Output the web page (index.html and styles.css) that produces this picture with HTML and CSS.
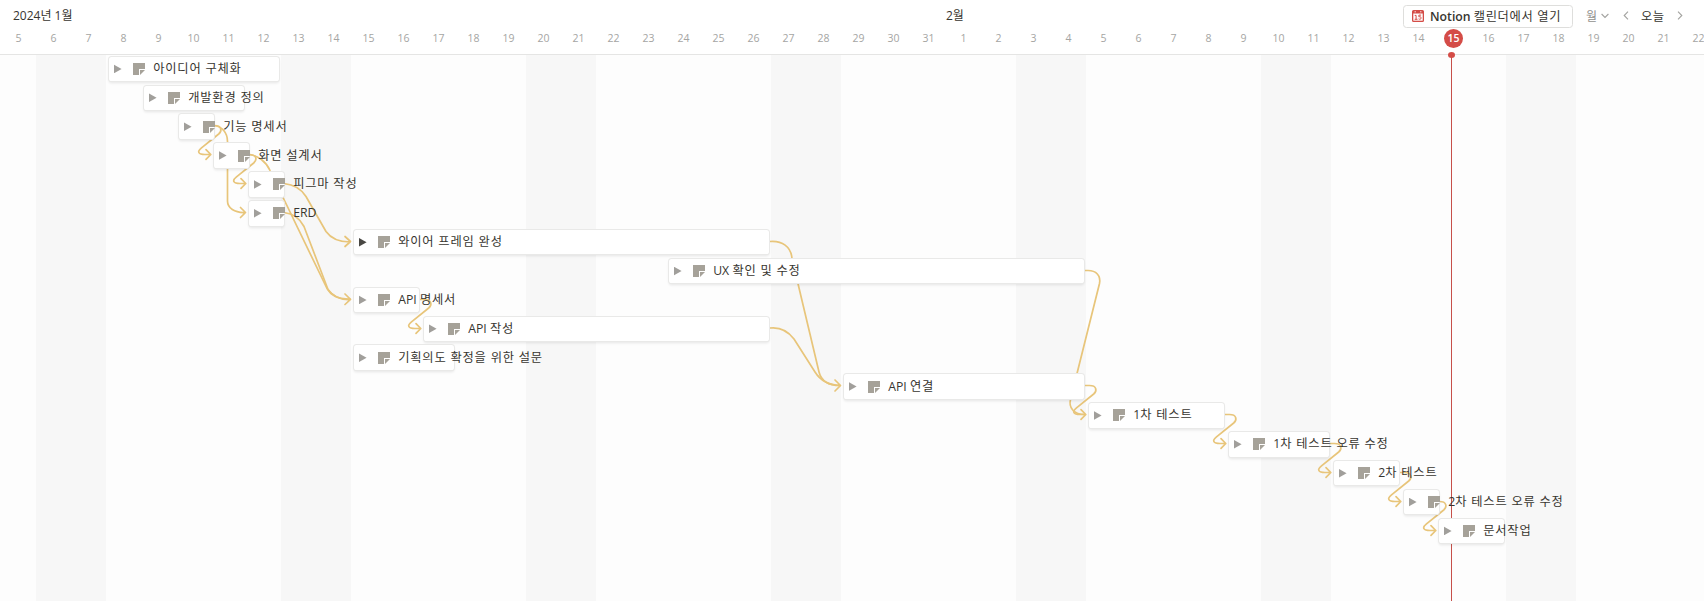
FILE: index.html
```html
<!DOCTYPE html>
<html lang="ko">
<head>
<meta charset="utf-8">
<title>타임라인</title>
<link rel="stylesheet" href="styles.css">
</head>
<body>
<div class="timeline">
  <header class="header">
    <div class="months">
      <span class="month month-first">2024년 1월</span>
      <span class="month month-second">2월</span>
      <div class="controls">
        <button class="calendar-button">
          <svg class="calendar-icon" viewBox="0 0 12 12"><path d="M1.500 0h9A1.500 1.500 0 0 1 12 1.500v9a1.500 1.500 0 0 1-1.500 1.500h-9A1.500 1.500 0 0 1 0 10.500v-9A1.500 1.500 0 0 1 1.500 0z" fill="#d44c47"/><path d="M1.300 3.500h9.400v7.200H1.300z" fill="#fff"/><path d="M2.500 1.800h1.500M8 1.800h1.500" stroke="#fff" stroke-width=".8"/><path d="M2.700 5.400h1.400v3.900M2.700 9.300h2.800M9.100 5.100H6.900v1.800c1.100-.4 2.300 0 2.300 1.100s-1.500 1.600-2.600.9" fill="none" stroke="#d44c47" stroke-width="1"/></svg>
          <span>Notion <span class="button-ko">캘린더에서 열기</span></span>
        </button>
        <span class="scale">월</span>
        <svg class="chevron-down" viewBox="0 0 8 6"><path d="M.6 1l3.400 3.500L7.400 1"/></svg>
        <svg class="chevron prev" viewBox="0 0 6 9"><path d="M5 .7L1.200 4.500L5 8.300"/></svg>
        <span class="today">오늘</span>
        <svg class="chevron next" viewBox="0 0 6 9"><path d="M1 .7l3.800 3.800L1 8.300"/></svg>
      </div>
    </div>
    <div class="days">
      <span>5</span><span>6</span><span>7</span><span>8</span><span>9</span><span>10</span><span>11</span><span>12</span><span>13</span><span>14</span><span>15</span><span>16</span><span>17</span><span>18</span><span>19</span><span>20</span><span>21</span><span>22</span><span>23</span><span>24</span><span>25</span><span>26</span><span>27</span><span>28</span><span>29</span><span>30</span><span>31</span><span>1</span><span>2</span><span>3</span><span>4</span><span>5</span><span>6</span><span>7</span><span>8</span><span>9</span><span>10</span><span>11</span><span>12</span><span>13</span><span>14</span><span><b class="current">15</b></span><span>16</span><span>17</span><span>18</span><span>19</span><span>20</span><span>21</span><span>22</span>
    </div>
  </header>
  <main class="board">
    <svg class="links" viewBox="0 0 1704 546" width="1704" height="546">
      <defs>
        <path id="hop" d="M0 0h4.500c7 0 8 5 4.200 8.500L-8.500 22.300c-5 4-3 6.700 3.500 6.700h5.700M-4 24.200l4.800 4.800-4.800 4.800"/>
      </defs>
      <g transform="translate(0 -55)">
        <use href="#hop" x="210" y="125.500"/>
        <use href="#hop" x="245" y="154.500"/>
        <use href="#hop" x="420" y="299.500"/>
        <use href="#hop" x="1085" y="385.500"/>
        <use href="#hop" x="1225" y="414.500"/>
        <use href="#hop" x="1330" y="443.500"/>
        <use href="#hop" x="1400" y="472.500"/>
        <use href="#hop" x="1435" y="501.500"/>
        <path d="M214 125.500c8 1 13.500 7 13.500 16V201c0 7 7 12 17.500 11.500M240.500 207.500l5 5-5 5"/>
        <path d="M249 154.500c9 1 17 7 21 16l57 118c4 7 12 11 23 10.500"/>
        <path d="M284 183.500c9 1 17 5 22 13l20 35c5 7 12 10.500 24 10.500M345 236.500l5.500 5-5.500 5"/>
        <path d="M284 212.500c9 1 16 6 20 14l24 63c4 6 12 10.500 22 10M345 294l5.500 5.300-5.500 5.200"/>
        <path d="M770 241.500c12-1 21 5 22 17L819 372c2 8 9 13.500 21 13.500"/>
        <path d="M770 328c9-1 18 3 24 11l21 33c5 8 12 13 25 13.500M835 380l5.500 5.500-5.500 5.500"/>
        <path d="M1085 270.500h3c8 0 13 5 11.500 13l-29 116c-2 8 3 15 14.500 15"/>
      </g>
    </svg>
    <i class="now"></i>
    <div class="rows">
      <div class="row"><div class="bar" style="--start:3;--span:5"><i class="toggle"></i><svg class="page" viewBox="0 0 12 12"><path d="M0 0h12v6H6v6H0z"/><path d="M7 7h5l-5 5z"/></svg><span class="title">아이디어 구체화</span></div></div>
      <div class="row"><div class="bar" style="--start:4;--span:3"><i class="toggle"></i><svg class="page" viewBox="0 0 12 12"><path d="M0 0h12v6H6v6H0z"/><path d="M7 7h5l-5 5z"/></svg><span class="title">개발환경 정의</span></div></div>
      <div class="row"><div class="bar" style="--start:5;--span:1"><i class="toggle"></i><svg class="page" viewBox="0 0 12 12"><path d="M0 0h12v6H6v6H0z"/><path d="M7 7h5l-5 5z"/></svg><span class="title">기능 명세서</span></div></div>
      <div class="row"><div class="bar" style="--start:6;--span:1"><i class="toggle"></i><svg class="page" viewBox="0 0 12 12"><path d="M0 0h12v6H6v6H0z"/><path d="M7 7h5l-5 5z"/></svg><span class="title">화면 설계서</span></div></div>
      <div class="row"><div class="bar" style="--start:7;--span:1"><i class="toggle"></i><svg class="page" viewBox="0 0 12 12"><path d="M0 0h12v6H6v6H0z"/><path d="M7 7h5l-5 5z"/></svg><span class="title">피그마 작성</span></div></div>
      <div class="row"><div class="bar" style="--start:7;--span:1"><i class="toggle"></i><svg class="page" viewBox="0 0 12 12"><path d="M0 0h12v6H6v6H0z"/><path d="M7 7h5l-5 5z"/></svg><span class="title"><span class="latin">ERD</span></span></div></div>
      <div class="row"><div class="bar" style="--start:10;--span:12"><i class="toggle filled"></i><svg class="page" viewBox="0 0 12 12"><path d="M0 0h12v6H6v6H0z"/><path d="M7 7h5l-5 5z"/></svg><span class="title">와이어 프레임 완성</span></div></div>
      <div class="row"><div class="bar" style="--start:19;--span:12"><i class="toggle"></i><svg class="page" viewBox="0 0 12 12"><path d="M0 0h12v6H6v6H0z"/><path d="M7 7h5l-5 5z"/></svg><span class="title"><span class="latin">UX </span>확인 및 수정</span></div></div>
      <div class="row"><div class="bar" style="--start:10;--span:2"><i class="toggle"></i><svg class="page" viewBox="0 0 12 12"><path d="M0 0h12v6H6v6H0z"/><path d="M7 7h5l-5 5z"/></svg><span class="title"><span class="latin">API </span>명세서</span></div></div>
      <div class="row"><div class="bar" style="--start:12;--span:10"><i class="toggle"></i><svg class="page" viewBox="0 0 12 12"><path d="M0 0h12v6H6v6H0z"/><path d="M7 7h5l-5 5z"/></svg><span class="title"><span class="latin">API </span>작성</span></div></div>
      <div class="row"><div class="bar" style="--start:10;--span:3"><i class="toggle"></i><svg class="page" viewBox="0 0 12 12"><path d="M0 0h12v6H6v6H0z"/><path d="M7 7h5l-5 5z"/></svg><span class="title">기획의도 확정을 위한 설문</span></div></div>
      <div class="row"><div class="bar" style="--start:24;--span:7"><i class="toggle"></i><svg class="page" viewBox="0 0 12 12"><path d="M0 0h12v6H6v6H0z"/><path d="M7 7h5l-5 5z"/></svg><span class="title"><span class="latin">API </span>연결</span></div></div>
      <div class="row"><div class="bar" style="--start:31;--span:4"><i class="toggle"></i><svg class="page" viewBox="0 0 12 12"><path d="M0 0h12v6H6v6H0z"/><path d="M7 7h5l-5 5z"/></svg><span class="title"><span class="latin">1</span>차 테스트</span></div></div>
      <div class="row"><div class="bar" style="--start:35;--span:3"><i class="toggle"></i><svg class="page" viewBox="0 0 12 12"><path d="M0 0h12v6H6v6H0z"/><path d="M7 7h5l-5 5z"/></svg><span class="title"><span class="latin">1</span>차 테스트 오류 수정</span></div></div>
      <div class="row"><div class="bar" style="--start:38;--span:2"><i class="toggle"></i><svg class="page" viewBox="0 0 12 12"><path d="M0 0h12v6H6v6H0z"/><path d="M7 7h5l-5 5z"/></svg><span class="title"><span class="latin">2</span>차 테스트</span></div></div>
      <div class="row"><div class="bar" style="--start:40;--span:1"><i class="toggle"></i><svg class="page" viewBox="0 0 12 12"><path d="M0 0h12v6H6v6H0z"/><path d="M7 7h5l-5 5z"/></svg><span class="title"><span class="latin">2</span>차 테스트 오류 수정</span></div></div>
      <div class="row"><div class="bar" style="--start:41;--span:2"><i class="toggle"></i><svg class="page" viewBox="0 0 12 12"><path d="M0 0h12v6H6v6H0z"/><path d="M7 7h5l-5 5z"/></svg><span class="title">문서작업</span></div></div>
    </div>
  </main>
</div>
</body>
</html>
```

FILE: styles.css
```css
* { box-sizing: border-box; }
body {
  margin: 0;
  background: #fff;
  color: #37352f;
  font-family: "Open Sans", "Noto Sans CJK KR", sans-serif;
  font-size: 12.25px;
}
.timeline {
  width: 1704px;
  height: 601px;
  overflow: hidden;
  display: flex;
  flex-direction: column;
}
.header {
  flex: none;
  height: 55px;
  border-bottom: 1px solid #e5e5e4;
  overflow: hidden;
}
.months {
  display: grid;
  grid-template-columns: 933px 1fr auto;
  height: 30px;
  align-items: center;
  padding-left: 13px;
  white-space: nowrap;
}
.month { font-size: 12px; line-height: 30px; padding-top: 1px; }
.controls {
  display: flex;
  align-items: center;
  width: 301px;
}
.calendar-button {
  display: flex;
  align-items: center;
  gap: 6px;
  width: 170px;
  height: 23px;
  margin-top: 1px;
  padding: 0 0 0 8px;
  border: 1px solid #dededc;
  border-radius: 3.5px;
  background: #fff;
  color: #37352f;
  font: 600 12.25px "Open Sans", "Noto Sans CJK KR", sans-serif;
  white-space: nowrap;
}
.button-ko { font-weight: 400; letter-spacing: .65px; }
.calendar-icon { width: 12px; height: 12px; flex: none; }
.scale { margin-left: 13px; color: #91918e; font-size: 12px; }
.chevron-down, .chevron { fill: none; stroke: #a3a3a0; stroke-width: 1.1; flex: none; }
.chevron-down { width: 8px; height: 6px; margin-left: 4px; }
.chevron { width: 6px; height: 9px; }
.prev { margin-left: 14px; }
.today { margin-left: 12px; font-size: 12.25px; letter-spacing: .5px; }
.next { margin-left: 12px; }
.days {
  display: grid;
  grid-template-columns: repeat(49, 35px);
  width: 1715px;
  margin-left: 1px;
  height: 24px;
  line-height: 17px;
  text-align: center;
  color: #a5a5a3;
  font-size: 10.5px;
}
.current {
  display: block;
  width: 19px;
  height: 19px;
  margin: -1px auto 0;
  border-radius: 50%;
  background: #d44c47;
  color: #fff;
  font-weight: 600;
  line-height: 19px;
}
.board {
  position: relative;
  flex: 1;
  background: repeating-linear-gradient(90deg, #f7f7f7 0 70px, #fdfdfd 70px 245px) 36px 0 / 1960px 100% repeat-x;
}
.links {
  position: absolute;
  left: 0;
  top: 0;
  fill: none;
  stroke: #e8c57a;
  stroke-width: 1.7;
  stroke-linecap: round;
  stroke-linejoin: round;
}
.now {
  position: absolute;
  left: 1451px;
  top: 0;
  width: 1px;
  height: 546px;
  background: #c6504a;
}
.now::before {
  content: "";
  position: absolute;
  left: -3px;
  top: -3px;
  width: 7px;
  height: 6px;
  border-radius: 50%;
  background: #d44c47;
}
.rows { position: relative; padding-top: 1.7px; }
.row { height: 28.875px; }
.bar {
  display: flex;
  align-items: center;
  width: calc(var(--span) * 35px - 4.4px);
  min-width: 35px;
  height: 24.5px;
  margin-left: calc(var(--start) * 35px + 3.6px);
  padding-left: 5px;
  border-radius: 2.6px;
  background: #fff;
  box-shadow: 0 0 0 1px #e9e9e8, 0 2px 3px rgba(15, 15, 15, .1);
  white-space: nowrap;
}
.toggle {
  flex: none;
  width: 8px;
  height: 9px;
  background: #a19f9b;
  clip-path: polygon(0 0, 100% 50%, 0 100%);
}
.filled { background: #484743; }
.page {
  flex: none;
  width: 12px;
  height: 12px;
  margin-left: 11.4px;
  fill: #a6a299;
}
.title { margin-left: 8.2px; font-size: 12.25px; line-height: 24px; letter-spacing: .8px; }
.latin { letter-spacing: 0; }
```
